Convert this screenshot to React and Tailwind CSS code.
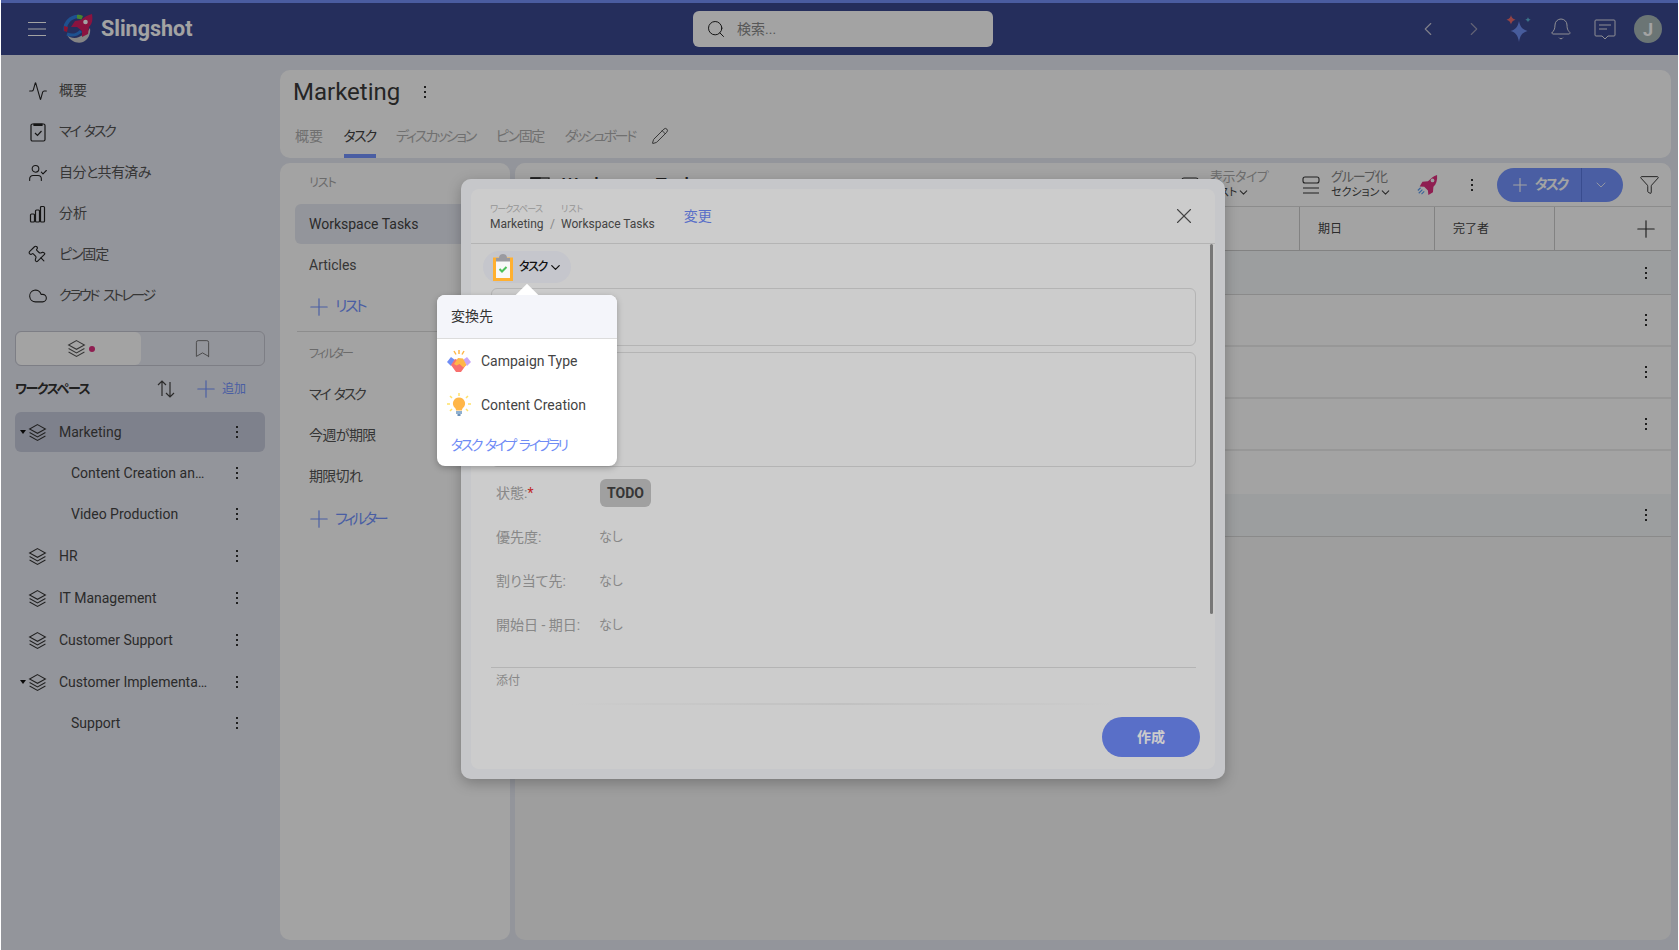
import { Activity, Bell, ChevronDown, ChevronLeft, ChevronRight, Cloud, Funnel, Pencil, Pin, Plus, Search, UserCheck, X, Bookmark } from 'lucide-react';

const navItems = [
  { label: '概要' },
  { label: 'マイ タスク', tr: 'tracking-[-2.2px] [word-spacing:3px]' },
  { label: '自分と共有済み', tr: 'tracking-[-0.6px]' },
  { label: '分析' },
  { label: 'ピン固定', tr: 'tracking-[-1.1px]' },
  { label: 'クラウド ストレージ', tr: 'tracking-[-2.4px] [word-spacing:4px]' },
];
const tabs = [
  { label: '概要' },
  { label: 'タスク', tr: 'tracking-[-1.8px]' },
  { label: 'ディスカッション', tr: 'tracking-[-2px]' },
  { label: 'ピン固定', tr: 'tracking-[-1.3px]' },
  { label: 'ダッシュボード', tr: 'tracking-[-2.4px]' },
];
const workspaces = [
  { name: 'Marketing', icon: true, open: true, active: true },
  { name: 'Content Creation an…' },
  { name: 'Video Production' },
  { name: 'HR', icon: true, gap: true },
  { name: 'IT Management', icon: true, gap: true },
  { name: 'Customer Support', icon: true, gap: true },
  { name: 'Customer Implementa…', icon: true, open: true, gap: true },
  { name: 'Support' },
];
const rows = [
  { h: 'h-[44px]', tint: true, kebab: true },
  { h: 'h-[52px]', kebab: true },
  { h: 'h-[52px]', kebab: true },
  { h: 'h-[52px]', kebab: true },
  { h: 'h-[43px]', none: true },
  { h: 'h-[43px]', tint: true, kebab: true },
];
const fields = [
  { label: '優先度:', value: 'なし' },
  { label: '割り当て先:', value: 'なし' },
  { label: '開始日 - 期日:', value: 'なし' },
];

function Kebab({ className = '' }) {
  return (
    <span className={`flex flex-col gap-[3px] ${className}`}>
      <i className="block w-[2px] h-[2px] bg-[#333]" />
      <i className="block w-[2px] h-[2px] bg-[#333]" />
      <i className="block w-[2px] h-[2px] bg-[#333]" />
    </span>
  );
}

function LayersIcon({ className = 'w-[19px] h-[19px]' }) {
  return (
    <svg viewBox="0 0 24 24" fill="none" stroke="currentColor" strokeWidth="1.300" className={className}>
      <path d="M12 2 22 7.500l-10 5.500L2 7.500Z" />
      <path d="M2 12 12 17.500 22 12" />
      <path d="M2 16.500 12 22l10-5.500" />
    </svg>
  );
}

function Logo() {
  return (
    <svg viewBox="0 0 30 30" className="w-[30px] h-[30px]">
      <path d="M4 21c3 3 8 4 12 2 4-2 8-4 11-9 1 6-2 12-7 14-5 2-12 0-16-7Z" fill="#d0d0d0" />
      <path d="M2.500 17C1 9 8 2 16 2.500" fill="none" stroke="#2f7fe0" strokeWidth="3.500" />
      <path d="M14 1c2-.4 4 0 6 1l-1.500 3.500-4.500-1Z" fill="#6fd04a" />
      <path d="M1 12l4 1-1 5-3-1Z" fill="#d8204f" />
      <path d="M4 20c5 2 10 1 14-3" fill="none" stroke="#2f7fe0" strokeWidth="3" />
      <path d="M29 0c1 6 0 10-3 13l-1 7-6 3 0-6-5-4-6 0 4-6 6-1c3-3 7-5 11-6Z" fill="#d81e63" />
      <circle cx="22.500" cy="8" r="2.300" fill="#fff" />
    </svg>
  );
}

function RocketIcon() {
  return (
    <svg viewBox="0 0 24 24" className="w-[22px] h-[24px]">
      <path d="M23 1c.5 6-1 10-4 13l-.5 6-5 3-.5-5-4-4-5-.5 3-5 6-.5C16 5 19 2 23 1Z" fill="#e0307f" />
      <circle cx="18" cy="7" r="2" fill="#f4f4f8" />
      <path d="M7 17l-4 4M9 19l-3 3M5 15l-3 3" stroke="#60a0f0" strokeWidth="1.300" fill="none" />
    </svg>
  );
}

function SparkleIcon() {
  return (
    <svg viewBox="0 0 28 28" className="w-[28px] h-[28px]">
      <path d="M14 6c1.200 6 3.500 8.500 8.500 10-5 1.500-7.300 4-8.500 11-1.200-7-3.500-9.500-8.500-11 5-1.500 7.300-4 8.500-10Z" fill="#7090f5" />
      <path d="M6 0c.5 2.500 1.700 3.800 4.500 4.700C7.700 5.700 6.500 7 6 9.500 5.500 7 4.300 5.700 1.500 4.700 4.300 3.800 5.500 2.500 6 0Z" fill="#ea6a6a" />
      <path d="M23 2c.3 1.600.9 2.200 2.700 2.700-1.800.6-2.400 1.200-2.700 2.800-.3-1.600-.9-2.200-2.700-2.800 1.800-.5 2.400-1.100 2.700-2.700Z" fill="#5fb8d8" />
    </svg>
  );
}

function ClipboardIcon() {
  return (
    <svg viewBox="0 0 20 28" className="w-[20px] h-[28px]">
      <rect x="1.500" y="6" width="17" height="20.500" fill="#f8f8f8" stroke="#ffb030" strokeWidth="3" />
      <path d="M6 5c0-2.500 1.500-4 4-4s4 1.500 4 4h3v3.500H3V5Z" fill="#9a9aa0" />
      <path d="M6.500 16l2.500 2.500 4.500-4.500" fill="none" stroke="#4cc05a" strokeWidth="2" />
    </svg>
  );
}

function HandshakeIcon() {
  return (
    <svg viewBox="0 0 24 24" className="w-[24px] h-[24px]">
      <path d="M12 1v4M7 2l2 3.500M17 2l-2 3.500" stroke="#ffb648" strokeWidth="1.500" fill="none" />
      <path d="M0 13 4 8l4 3-4 6Z" fill="#6f8df5" />
      <path d="M24 13l-4-5-4 3 4 6Z" fill="#c8a6f8" />
      <path d="M4 16 8 10l6 2 5 4-5 7H9Z" fill="#f8706e" />
      <path d="M7 15l4-6 5 .5 3.500 6.500-3 2.500-4-3.500-3 1.500Z" fill="#ffb648" />
    </svg>
  );
}

function BulbIcon() {
  return (
    <svg viewBox="0 0 24 24" className="w-[24px] h-[24px]">
      <path d="M12 0v3M3 3l2 2M21 3l-2 2M0 11h3M21 11h3M3 18l2-2M21 18l-2-2" stroke="#ffe26a" strokeWidth="1.500" fill="none" />
      <path d="M12 4.500a6 6 0 0 1 4 10.500c-.8.8-1 1.500-1 2.500H9c0-1-.2-1.700-1-2.500A6 6 0 0 1 12 4.500Z" fill="#ffb648" />
      <rect x="9" y="18" width="6" height="3" fill="#8fb0d0" />
      <rect x="10.500" y="21" width="3" height="2" fill="#6a90b8" />
    </svg>
  );
}

function AddLink({ label, tr, className = '' }) {
  return (
    <div className={`flex items-center text-[#7494ff] text-[15px] ${className}`}>
      <Plus size={28} strokeWidth={1} className="mr-[2px]" />
      <span className={tr}>{label}</span>
    </div>
  );
}

export default function App() {
  return (
    <div className="relative w-[1679px] h-[950px] overflow-hidden bg-[#e7e9f2] border-x border-[#fff] text-[#555] text-[14px] font-[family-name:Roboto,'Noto_Sans_CJK_JP',sans-serif] [font-feature-settings:'palt']">
      {/* header */}
      <header className="h-[55px] bg-[#3b4890] border-t-[3px] border-[#7490fa] flex items-center text-white">
        <div className="w-[640px] flex items-center pl-[27px]">
          <svg viewBox="0 0 18 14" className="w-[18px] h-[14px] mr-[17px]" stroke="#fff" strokeWidth="1" fill="none">
            <path d="M0 .5h18M0 7h18M0 13.500h18" />
          </svg>
          <Logo />
          <span className="ml-[8px] text-[21.500px] font-bold">Slingshot</span>
        </div>
        <div className="ml-[52px] w-[300px] h-[36px] bg-white rounded-md flex items-center pl-[13px] text-[#8a8a8a]">
          <Search size={20} strokeWidth={1.2} className="text-[#222]" />
          <span className="ml-[11px]">検索...</span>
        </div>
        <div className="ml-auto flex items-center pr-[16px]">
          <ChevronLeft size={22} strokeWidth={1.2} className="text-[#c8c8d8] mr-[24px]" />
          <ChevronRight size={22} strokeWidth={1.2} className="text-[#9a9ab8] mr-[20px]" />
          <SparkleIcon />
          <Bell size={24} strokeWidth={1} className="text-[#e0e0e8] ml-[16px]" />
          <svg viewBox="0 0 22 22" className="w-[22px] h-[22px] ml-[21px]" fill="none" stroke="#e0e0e8" strokeWidth="1">
            <path d="M2 2h18a1 1 0 0 1 1 1v14a1 1 0 0 1-1 1h-6l-3 3-3-3H2a1 1 0 0 1-1-1V3a1 1 0 0 1 1-1Z" />
            <path d="M5 7h12M5 11h8" />
          </svg>
          <div className="ml-[18px] w-[28px] h-[28px] rounded-full bg-[#a8b8b8] text-white font-bold text-[18px] flex items-center justify-center">J</div>
        </div>
      </header>

      <div className="flex h-[895px]">
        {/* sidebar */}
        <aside className="w-[279px] shrink-0 pt-[15px]">
          {navItems.map((item, i) => (
            <div key={item.label} className="h-[41px] flex items-center pl-[27px] text-[#555]">
              <span className="w-[20px] h-[20px] mr-[11px] flex items-center justify-center text-[#222]">
                {i === 0 && <Activity size={20} strokeWidth={1.3} />}
                {i === 1 && (
                  <svg viewBox="0 0 18 20" className="w-[18px] h-[20px]" fill="none" stroke="currentColor" strokeWidth="1.200">
                    <rect x="2" y="2" width="14" height="17" rx="1.500" />
                    <path d="M5 2h8v1.500H5Z" fill="currentColor" />
                    <path d="M6 11l2.500 2.500L12.500 9" />
                  </svg>
                )}
                {i === 2 && <UserCheck size={20} strokeWidth={1.3} />}
                {i === 3 && (
                  <svg viewBox="0 0 18 18" className="w-[18px] h-[18px]" fill="none" stroke="currentColor" strokeWidth="1.200">
                    <rect x="1.500" y="9" width="4" height="8" rx="1" />
                    <rect x="6.500" y="5" width="4" height="12" rx="1" />
                    <rect x="11.500" y="1.500" width="4" height="15.500" rx="1" />
                  </svg>
                )}
                {i === 4 && <Pin size={20} strokeWidth={1.3} className="-rotate-45" />}
                {i === 5 && <Cloud size={20} strokeWidth={1.3} />}
              </span>
              <span className={item.tr}>{item.label}</span>
            </div>
          ))}

          <div className="ml-[14px] mr-[15px] mt-[15px] h-[35px] rounded-md border border-[#c4c6d0] flex">
            <div className="w-[125px] rounded-md bg-[#fff] flex items-center justify-center pl-[5px] text-[#555]">
              <LayersIcon />
              <span className="ml-[3px] w-[6px] h-[6px] rounded-full bg-[#e0307f]" />
            </div>
            <div className="flex-1 flex items-center justify-center">
              <Bookmark size={21} strokeWidth={1} className="text-[#666]" />
            </div>
          </div>

          <div className="h-[46px] flex items-center pl-[14px] pr-[20px]">
            <span className="text-[13px] font-bold text-[#333] w-[141px] tracking-[-1.4px]">ワークスペース</span>
            <svg viewBox="0 0 20 20" className="w-[20px] h-[20px]" fill="none" stroke="#444" strokeWidth="1.200">
              <path d="M6 17V2M2 6l4-4 4 4M14 3v15M10 14l4 4 4-4" />
            </svg>
            <Plus size={28} strokeWidth={1} className="text-[#7494ff] ml-[16px]" />
            <span className="ml-[2px] text-[12px] text-[#7494ff]">追加</span>
          </div>

          {workspaces.map((w) => (
            <div
              key={w.name}
              className={`relative h-[40px] ml-[14px] mr-[15px] flex items-center rounded-md text-[#444] mb-px ${w.active ? 'bg-[#c6cadb]' : ''} ${w.gap ? 'mt-[2px]' : ''}`}
            >
              {w.open && <span className="absolute left-[5px] top-[18px] border-x-[3px] border-t-[4px] border-x-transparent border-t-[#111]" />}
              {w.icon ? <LayersIcon className="ml-[13px] w-[19px] h-[19px] text-[#333]" /> : null}
              <span className={w.icon ? 'ml-[12px]' : 'ml-[56px]'}>{w.name}</span>
              <Kebab className="absolute left-[221px] top-[14px]" />
            </div>
          ))}
        </aside>

        {/* main */}
        <main className="flex-1 pt-[15px] pr-[7px]">
          <section className="h-[88px] rounded-[10px] bg-white">
            <div className="h-[44px] px-[13px] flex items-center">
              <h1 className="text-[24px] font-normal text-[#3a3a3a]">Marketing</h1>
              <Kebab className="ml-[24px]" />
            </div>
            <div className="h-[44px] pl-[15px] flex items-center gap-[20.500px]">
              {tabs.map((t) => (
                <span
                  key={t.label}
                  className={`h-full flex items-center pt-[5px] border-b-4 ${t.tr || ''} ${t.label === 'タスク' ? 'border-[#7494ff] text-[#444]' : 'border-transparent text-[#b0b0b0]'}`}
                >
                  {t.label}
                </span>
              ))}
              <Pencil size={18} strokeWidth={1.1} className="text-[#333] -ml-[4px]" />
            </div>
          </section>

          <div className="flex gap-[5px] mt-[5px] h-[777px]">
            <section className="w-[230px] rounded-[10px] bg-white">
              <div className="h-[39px] mb-[2px] pl-[29px] flex items-center text-[12px] text-[#a8a8a8] tracking-[-1px]">リスト</div>
              <div className="ml-[15px] h-[40px] pl-[14px] flex items-center rounded-md bg-[#e7e9f2] text-[#444]">Workspace Tasks</div>
              <div className="mt-px h-[41px] pl-[29px] flex items-center text-[#555]">Articles</div>
              <AddLink label="リスト" tr="tracking-[-2.4px]" className="h-[41px] pl-[25px]" />
              <div className="mx-[17px] mt-[4px] border-t border-[#ddd]" />
              <div className="h-[42px] pt-[2px] pl-[29px] flex items-center text-[12px] text-[#a8a8a8] tracking-[-1.9px]">フィルター</div>
              <div className="h-[41px] pl-[29px] flex items-center tracking-[-2.2px] [word-spacing:3px]">マイ タスク</div>
              <div className="h-[41px] pl-[29px] flex items-center tracking-[-0.6px]">今週が期限</div>
              <div className="h-[41px] pl-[29px] flex items-center tracking-[-0.7px]">期限切れ</div>
              <AddLink label="フィルター" tr="tracking-[-3px]" className="mt-px h-[42px] pl-[25px]" />
            </section>

            <section className="flex-1 rounded-[10px] bg-[#f7f7f8] overflow-hidden">
              <div className="h-[44px] bg-white border-b border-[#dcdcdc] flex items-center pl-[15px] pr-[11px]">
                <svg viewBox="0 0 20 16" className="w-[20px] h-[16px]" fill="none" stroke="#333" strokeWidth="1.300">
                  <rect x="1" y="1" width="18" height="14" />
                  <path d="M1 1h9v14H1Z" fill="#333" />
                </svg>
                <span className="ml-[12px] text-[18px] font-medium text-[#333]">Workspace Tasks</span>
                <svg viewBox="0 0 18 18" className="ml-auto w-[18px] h-[18px]" fill="none" stroke="#333" strokeWidth="1.100">
                  <rect x="1" y="2" width="16" height="6" rx="2" />
                  <path d="M1 12h16M1 16h16" />
                </svg>
                <div className="ml-[11px] w-[92px] leading-none">
                  <div className="text-[13px] text-[#aaa] tracking-[-0.5px]">表示タイプ</div>
                  <div className="text-[11px] text-[#444] mt-[3px] flex items-center">リスト<ChevronDown size={13} /></div>
                </div>
                <svg viewBox="0 0 18 20" className="w-[18px] h-[20px]" fill="none" stroke="#333" strokeWidth="1.100">
                  <rect x="1" y="2" width="16" height="6" rx="2" />
                  <path d="M1 13h16M1 18h16" />
                </svg>
                <div className="ml-[11px] w-[85px] leading-none">
                  <div className="text-[13px] text-[#888] tracking-[-1px]">グループ化</div>
                  <div className="text-[11px] text-[#444] mt-[3px] flex items-center">セクション<ChevronDown size={13} /></div>
                </div>
                <RocketIcon />
                <Kebab className="ml-[33px]" />
                <div className="ml-[24px] h-[34px] w-[126px] rounded-full bg-[#7494ff] flex items-center text-white">
                  <div className="w-[85px] h-full flex items-center pl-[12px] border-r border-[#5a78e0] font-bold tracking-[-2.2px]">
                    <Plus size={22} strokeWidth={1.2} className="mr-[4px]" />
                    タスク
                  </div>
                  <div className="flex-1 flex justify-center pr-[4px]"><ChevronDown size={16} strokeWidth={1.2} /></div>
                </div>
                <Funnel size={21} strokeWidth={1.1} className="ml-[16px] text-[#333]" />
              </div>

              <div className="h-[44px] bg-white border-b border-[#ccc] flex items-stretch">
                <div className="flex-1 border-r border-[#ccc]" />
                <div className="w-[135px] border-r border-[#ccc] pl-[18px] flex items-center text-[12px] text-[#444]">期日</div>
                <div className="w-[120px] border-r border-[#ccc] pl-[18px] flex items-center text-[12px] text-[#444]">完了者</div>
                <div className="w-[116px] flex items-center justify-end pr-[11px]"><Plus size={28} strokeWidth={1} className="text-[#333]" /></div>
              </div>

              {rows.map((r, i) => (
                <div
                  key={i}
                  className={`${r.h} flex items-center justify-end pr-[24px] ${r.none ? '' : r.tint ? 'border-b border-[#d8d8d8]' : 'border-b-2 border-[#ececec]'} ${r.tint ? 'bg-[#f4f7f9]' : 'bg-white'}`}
                >
                  {r.kebab && <Kebab />}
                </div>
              ))}
            </section>
          </div>
        </main>
      </div>

      {/* page dim */}
      <div className="absolute inset-0 bg-black/[0.36]" />

      {/* modal */}
      <div className="absolute left-[460px] top-[179px] w-[764px] h-[600px] rounded-[10px] bg-[#f8f9fd] p-[10px] shadow-[0_4px_14px_rgba(0,0,0,0.25)]">
        <div className="relative h-full rounded-[8px] bg-white flex flex-col">
          <div className="h-[55px] shrink-0 border-b border-[#e2e2e2] flex items-center pl-[19px] pr-[18px]">
            <div className="leading-none pt-[2px]">
              <div className="text-[9px] text-[#bbb] flex">
                <span className="w-[71px] tracking-[-0.8px]">ワークスペース</span>
                <span>リスト</span>
              </div>
              <div className="mt-[4px] text-[12px] text-[#555] flex">
                <span className="w-[60px]">Marketing</span>
                <span className="w-[11px] text-[#aaa]">/</span>
                <span>Workspace Tasks</span>
              </div>
            </div>
            <span className="ml-[29px] text-[#708bfa]">変更</span>
            <X size={26} strokeWidth={1} className="ml-auto text-[#555]" />
          </div>

          <div className="flex-1 pl-[20px] pr-[19px] min-h-0">
            <div className="mt-[7px] h-[32px]" />
            <div className="mt-[5px] h-[58px] rounded-md border border-[#e2e2e2]" />
            <div className="mt-[6px] h-[115px] rounded-md border border-[#e2e2e2]" />
            <div className="mt-[4px]">
              <div className="h-[44px] flex items-center pl-[5px] text-[14px] text-[#aaa]">
                <span className="w-[104px]">状態:<span className="text-[#f03030]">*</span></span>
                <span className="h-[28px] w-[51px] rounded-md bg-[#c8c8c8] text-[#444] font-bold text-[14px] flex items-center justify-center">TODO</span>
              </div>
              {fields.map((f) => (
                <div key={f.label} className="h-[44px] flex items-center pl-[5px] text-[14px] text-[#aaa]">
                  <span className="w-[103px]">{f.label}</span>
                  <span className="text-[13px]">{f.value}</span>
                </div>
              ))}
            </div>
            <div className="mt-[20px] border-t border-[#e2e2e2] pt-[4px] pl-[5px] text-[12px] text-[#aaa]">添付</div>
          </div>

          <div className="h-[66px] shrink-0 relative flex items-start justify-end pr-[15px] pt-[14px]">
            <div className="absolute left-[100px] right-[100px] top-0 h-[2px] bg-linear-to-r from-transparent via-[#f2f2f2] to-transparent" />
            <div className="w-[98px] h-[40px] rounded-full bg-[#708bfa] text-white font-bold flex items-center justify-center">作成</div>
          </div>

          <div className="absolute right-[2px] top-[55px] w-[3px] h-[370px] rounded-full bg-[#959595]" />
        </div>
        {/* modal dim while the menu is open */}
        <div className="absolute inset-0 rounded-[10px] bg-black/20" />
      </div>

      {/* type chip stays above the dim */}
      <div className="absolute left-[482px] top-[251px] h-[32px] w-[88px] rounded-full bg-[#c5c6cc] flex items-center pl-[10px] text-[#111] text-[12px] font-medium">
        <ClipboardIcon />
        <span className="ml-[6px] tracking-[-1.3px]">タスク</span>
        <ChevronDown size={15} className="ml-[1px]" />
      </div>

      {/* type menu */}
      <div className="absolute left-[436px] top-[295px] w-[180px] h-[171px] rounded-lg bg-white shadow-[0_2px_6px_rgba(0,0,0,0.25)]">
        <span className="absolute left-[82px] -top-[8px] w-[16px] h-[16px] rotate-45 bg-white" />
        <div className="relative h-[44px] rounded-t-lg bg-[#f4f5fa] border-b border-[#dcdcdc] pl-[14px] flex items-center text-[#333]">変換先</div>
        <div className="h-[44px] flex items-center pl-[10px] text-[#444]">
          <HandshakeIcon />
          <span className="ml-[10px]">Campaign Type</span>
        </div>
        <div className="h-[44px] flex items-center pl-[10px] text-[#444]">
          <BulbIcon />
          <span className="ml-[10px]">Content Creation</span>
        </div>
        <div className="pl-[14px] pt-[8px] text-[#6f8cf5] tracking-[-2.5px] [word-spacing:3px]">タスク タイプ ライブラリ</div>
      </div>
    </div>
  );
}
